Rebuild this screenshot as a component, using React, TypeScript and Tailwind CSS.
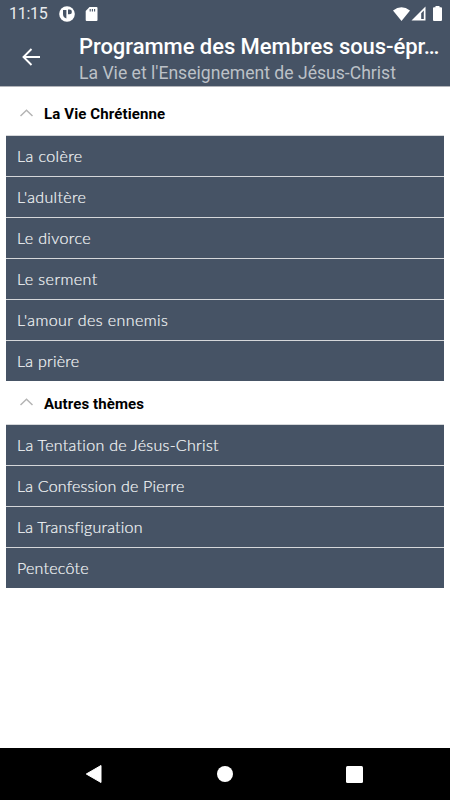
import React from "react";

interface Item {
  label: string;
  className: string;
}

interface Section {
  title: string;
  titleClass: string;
  headerClass: string;
  items: Item[];
}

const sections: Section[] = [
  {
    title: "La Vie Chrétienne",
    titleClass: "tracking-[0.12px]",
    headerClass: "h-[48px] pt-[6px]",
    items: [
      { label: "La colère", className: "tracking-[0.4px]" },
      { label: "L'adultère", className: "tracking-[0.35px]" },
      { label: "Le divorce", className: "tracking-[0.38px]" },
      { label: "Le serment", className: "tracking-[0.45px]" },
      { label: "L'amour des ennemis", className: "tracking-[0.42px]" },
      { label: "La prière", className: "tracking-[0.25px]" },
    ],
  },
  {
    title: "Autres thèmes",
    titleClass: "tracking-[0.1px]",
    headerClass: "h-[43px] pt-[2px]",
    items: [
      { label: "La Tentation de Jésus-Christ", className: "tracking-[0.3px]" },
      { label: "La Confession de Pierre", className: "tracking-[0.2px]" },
      { label: "La Transfiguration", className: "tracking-[0.22px]" },
      { label: "Pentecôte", className: "tracking-[0.25px]" },
    ],
  },
];

const StatusBar: React.FC = () => (
  <div className="flex h-[27px] items-center pl-[9px] pr-[8px] text-white">
    <span className="w-[50px] text-[16px] leading-[27px] tracking-[-0.3px] text-[#e8ebee]">11:15</span>
    <svg className="h-[16px] w-[16px]" viewBox="0 0 16 16">
      <circle cx="8" cy="8" r="7.8" fill="#fff" />
      <path d="M4 4h3.400v8.500Q4 11.500 4 8z" fill="#465365" />
      <path d="M9 3.500h1.500a2.300 2.300 0 0 1 0 4.800H9z" fill="#465365" />
    </svg>
    <svg className="ml-[10px] h-[14px] w-[13px]" viewBox="0 0 13 14">
      <path d="M4.5 0h7Q12.5 0 12.5 1v12q0 1-1 1H1.7q-1 0-1-1V4z" fill="#fff" />
      <path d="M5.2 2v2.4M7.4 2v2.4M9.6 2v2.4" stroke="#465365" strokeWidth="1.1" />
    </svg>
    <div className="ml-auto flex items-center">
      <svg className="h-[14px] w-[17px]" viewBox="0 0 17 14">
        <path d="M0 3.5Q8.5-3 17 3.5L8.5 14z" fill="#fff" />
      </svg>
      <svg className="ml-px h-[15px] w-[15px]" viewBox="0 0 15 15">
        <path d="M14.5.5v14H.5z" fill="#fff" />
        <path d="M12.8 4.6v8.4H10.2V7.2z" fill="#465365" />
      </svg>
      <svg className="ml-[7px] h-[15px] w-[9px]" viewBox="0 0 9 15">
        <path d="M2.5 1.3V0h4v1.3H8q1 0 1 1V14q0 1-1 1H1q-1 0-1-1V2.3q0-1 1-1z" fill="#fff" />
      </svg>
    </div>
  </div>
);

const NavigationBar: React.FC = () => (
  <nav className="mt-auto flex h-[52px] items-center justify-between bg-black pl-[85px] pr-[87px] text-white">
    <svg className="h-[18px] w-[18px]" viewBox="0 0 18 18">
      <path d="M16 .5v17L1.3 9z" fill="#fff" stroke="#fff" strokeLinejoin="round" />
    </svg>
    <div className="h-[16px] w-[16px] rounded-full bg-white" />
    <div className="h-[17px] w-[17px] rounded-[1.5px] bg-white" />
  </nav>
);

const App: React.FC = () => {
  return (
    <div className="flex h-[800px] w-[450px] flex-col overflow-hidden bg-white font-['Roboto',sans-serif]">
      <header className="h-[87px] border-b border-[#b2b4b9] bg-[#465365]">
        <StatusBar />
        <div className="flex pl-[22px]">
          <button className="h-[59px] w-[57px]" aria-label="Retour">
            <svg className="h-[18px] w-[18px]" viewBox="0 0 18 18" fill="none" stroke="#fff" strokeWidth="1.9">
              <path d="M9.5 1L1.5 9l8 8M1.5 9H18" />
            </svg>
          </button>
          <div className="whitespace-nowrap pt-[6px]">
            <h1 className="text-[22px] font-medium leading-[27px] tracking-[-0.05px] text-white">
              Programme des Membres sous-épr…
            </h1>
            <p className="text-[17.6px] leading-[26px] text-[#bcc1c7]">La Vie et l'Enseignement de Jésus-Christ</p>
          </div>
        </div>
      </header>

      <main>
        {sections.map((section) => (
          <section key={section.title}>
            <div className={`flex items-center pl-[20px] ${section.headerClass}`}>
              <svg className="mb-[3px] h-[8px] w-[13px]" viewBox="0 0 13 8" fill="none" stroke="#b4b4b4" strokeWidth="1.5">
                <path d="M.5 7l6-5.8 6 5.8" />
              </svg>
              <h2 className={`ml-[11px] whitespace-nowrap text-[15px] font-bold leading-[20px] text-black ${section.titleClass}`}>
                {section.title}
              </h2>
            </div>
            <ul className="mx-[6px] font-['Lato',sans-serif]">
              {section.items.map((item) => (
                <li
                  key={item.label}
                  className="flex h-[41px] items-center border-t border-[#d5d7da] bg-[#465365] pb-px pl-[11px] text-[16px] font-light text-[#f4f6f7] [-webkit-text-stroke:0.2px]"
                >
                  <span className={`whitespace-nowrap ${item.className}`}>{item.label}</span>
                </li>
              ))}
            </ul>
          </section>
        ))}
      </main>

      <NavigationBar />
    </div>
  );
};

export default App;
